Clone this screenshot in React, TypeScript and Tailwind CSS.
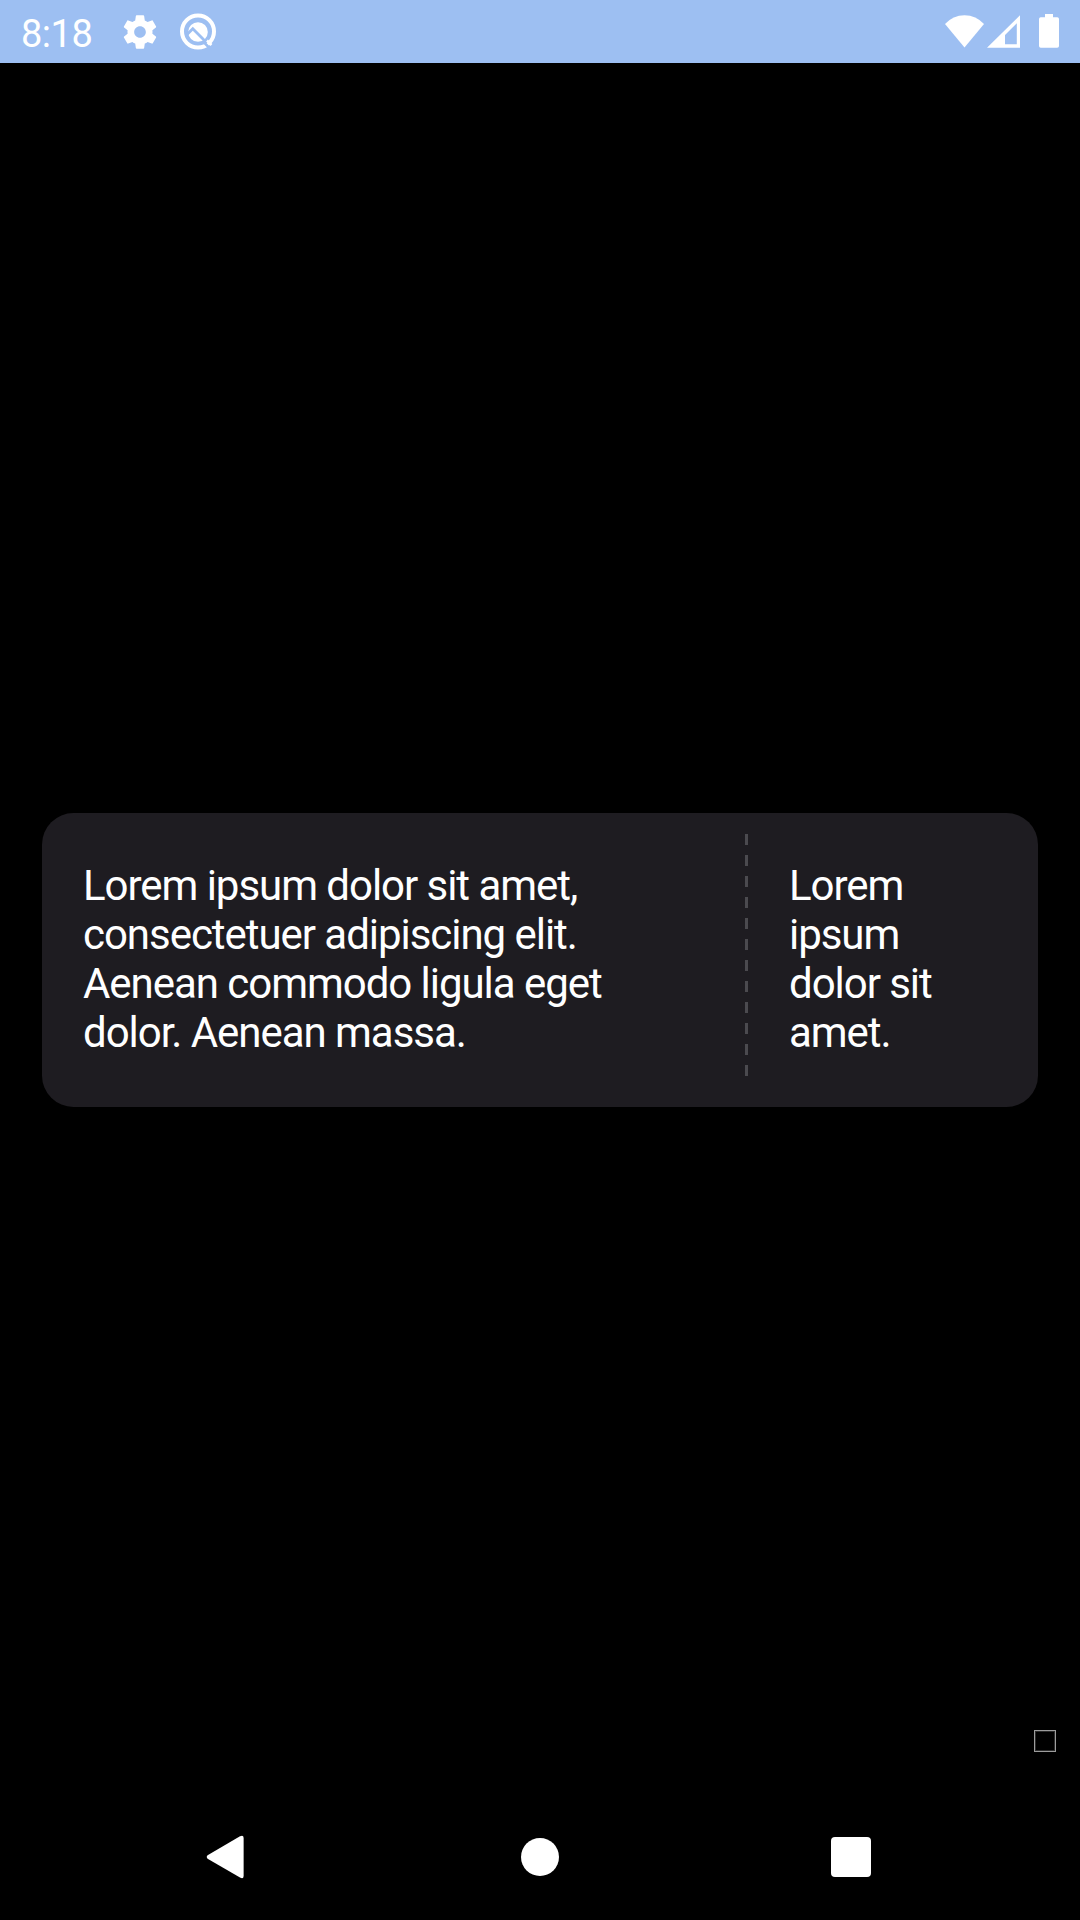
function StatusBar() {
  return (
    <header className="flex h-[63px] shrink-0 items-center bg-[#9dbff2] text-white">
      <span className="ml-[21px] mt-[4px] w-[80px] text-[38px] leading-[58px] tracking-[-0.5px]">8:18</span>
      <svg className="ml-[19px] size-10" viewBox="0 0 24 24" fill="currentColor">
        <path d="M19.43 12.98c.04-.32.07-.64.07-.98s-.03-.66-.07-.98l2.11-1.65c.19-.15.24-.42.12-.64l-2-3.46c-.12-.22-.39-.3-.61-.22l-2.49 1c-.52-.4-1.08-.73-1.69-.98l-.38-2.65C14.46 2.18 14.25 2 14 2h-4c-.25 0-.46.18-.49.42l-.38 2.65c-.61.25-1.17.59-1.69.98l-2.49-1c-.23-.09-.49 0-.61.22l-2 3.46c-.13.22-.07.49.12.64l2.11 1.65c-.04.32-.07.65-.07.98s.03.66.07.98l-2.11 1.65c-.19.15-.24.42-.12.64l2 3.46c.12.22.39.3.61.22l2.49-1c.52.4 1.08.73 1.69.98l.38 2.65c.03.24.24.42.49.42h4c.25 0 .46-.18.49-.42l.38-2.65c.61-.25 1.17-.59 1.69-.98l2.49 1c.23.09.49 0 .61-.22l2-3.46c.12-.22.07-.49-.12-.64l-2.11-1.65zM12 15.5c-1.93 0-3.5-1.57-3.5-3.5s1.57-3.5 3.5-3.5 3.5 1.57 3.5 3.5-1.57 3.5-3.5 3.5z" />
      </svg>
      <svg className="ml-[19px] h-[38px] w-[38px]" viewBox="179 12.5 38 38" fill="none" stroke="currentColor">
        <circle cx="198" cy="31" r="16" strokeWidth="4" />
        <circle cx="198" cy="31.5" r="9.8" fill="currentColor" stroke="none" />
        <path d="M186.5 34.500L192.800 28.200L207 42.400" stroke="#9dbff2" strokeWidth="2.8" />
        <path d="M203.5 41.5L210.5 48.5" stroke="#9dbff2" strokeWidth="2.5" />
        <path d="M207 40L211.5 44.5" strokeWidth="2.5" />
      </svg>
      <svg className="ml-auto h-[34px] w-[40px]" viewBox="945 14 40 34" fill="currentColor">
        <path d="M964.5 46.5L945 23Q953 14.2 964.5 14.2T984 23Z" />
      </svg>
      <svg className="ml-[2px] h-[34px] w-[33px]" viewBox="987 14 33 34">
        <path d="M987 46.8L1020 14.3V46.8ZM1005 43.3H1016.8V22.3L1005 34Z" fill="currentColor" fillRule="evenodd" />
      </svg>
      <svg className="ml-[19px] mr-[21px] mb-px h-[34px] w-[20px]" viewBox="1039 14 20 34" fill="currentColor">
        <path d="M1045 14h8v3.3h4.2q1.8 0 1.8 1.8V46q0 1.8-1.8 1.8h-16.4q-1.8 0-1.8-1.8V19.1q0-1.8 1.8-1.8h4.2z" />
      </svg>
    </header>
  );
}

function DashedDivider() {
  return (
    <div className="mt-[21px] flex w-[3px] flex-col gap-[10px]">
      {Array.from({ length: 12 }, (_, i) => (
        <span key={i} className="h-[11px] w-full bg-[#4b4a4f]" />
      ))}
    </div>
  );
}

function TextCard() {
  return (
    <section className="mx-[42px] flex h-[294px] rounded-[31.5px] bg-[#1e1c21] text-[42px] leading-[49px] tracking-[-1.04px] text-white">
      <p className="w-[703px] pt-[48px] pl-[41px]">
        Lorem ipsum dolor sit amet,<br />
        consectetuer adipiscing elit.<br />
        Aenean commodo ligula eget<br />
        dolor. Aenean massa.
      </p>
      <DashedDivider />
      <p className="pt-[48px] pl-[41px]">
        Lorem<br />
        ipsum<br />
        dolor sit<br />
        amet.
      </p>
    </section>
  );
}

function NavigationBar() {
  return (
    <nav className="flex h-[126px] shrink-0 items-center text-white">
      <svg className="ml-[206px] h-[44px] w-[38px]" viewBox="206 1835 38 44" fill="currentColor">
        <path d="M207.6 1855.3L240 1836.2Q243.6 1834.5 243.6 1838V1876Q243.6 1879.4 240 1877.6L207.6 1858.7Q205.9 1857 207.6 1855.3Z" />
      </svg>
      <span className="ml-[277px] size-[38px] rounded-full bg-white" />
      <span className="ml-[272px] size-[40px] rounded-[4px] bg-white" />
    </nav>
  );
}

export default function App() {
  return (
    <div className="flex h-[1920px] w-[1080px] flex-col overflow-hidden bg-black font-['Roboto',sans-serif]">
      <StatusBar />
      <main className="flex flex-1 flex-col pt-[750px]">
        <TextCard />
        <span className="mt-auto mr-[24px] mb-[42px] size-[22px] self-end border border-[#9c9c9c] shadow-[inset_0_0_0_1px_#2c2c2c]" />
      </main>
      <NavigationBar />
    </div>
  );
}
